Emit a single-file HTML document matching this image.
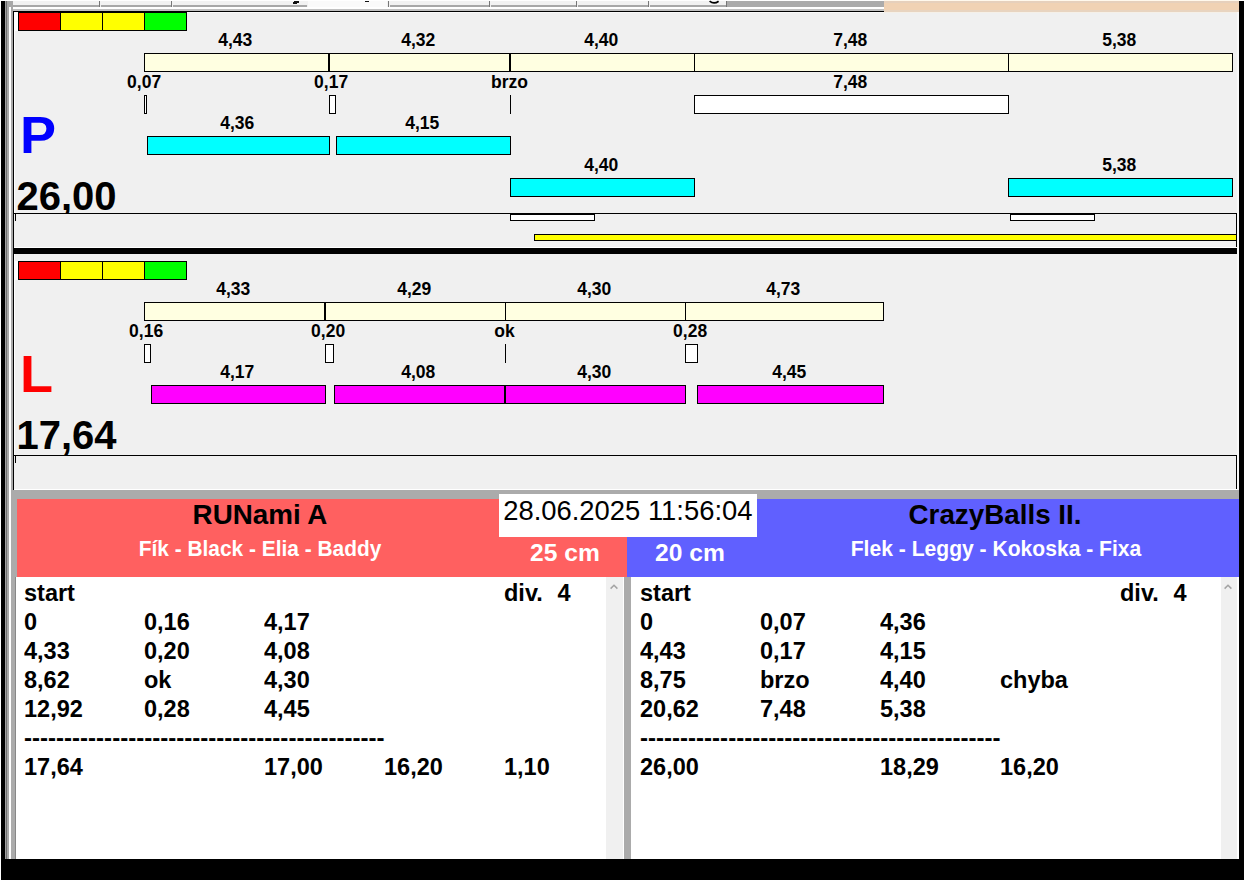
<!DOCTYPE html>
<html><head><meta charset="utf-8"><title>Flyball</title>
<style>
html,body{margin:0;padding:0}
body{width:1244px;height:880px;background:#f0f0f0;position:relative;overflow:hidden;font-family:"Liberation Sans",Arial,sans-serif}
.r{position:absolute;box-sizing:border-box;border:1px solid #000}
.f{position:absolute}
.lb{position:absolute;text-align:center;font-weight:bold;white-space:nowrap}
.lt{position:absolute;white-space:pre;transform-origin:0 50%}
.b{font-weight:bold}
</style></head><body>
<div class="f" style="left:0px;top:0px;width:1px;height:880px;background:#fff"></div>
<div class="f" style="left:1px;top:1px;width:4px;height:879px;background:#000"></div>
<div class="f" style="left:5px;top:0px;width:1px;height:880px;background:#a0a0a0"></div>
<div class="f" style="left:6px;top:0px;width:1px;height:880px;background:#707070"></div>
<div class="f" style="left:7px;top:0px;width:2px;height:880px;background:#a8a8a8"></div>
<div class="f" style="left:9px;top:7px;width:2px;height:873px;background:#fff"></div>
<div class="f" style="left:9px;top:0px;width:2px;height:7px;background:#a8a8a8"></div>
<div class="f" style="left:11px;top:0px;width:2px;height:490px;background:#a8a8a8"></div>
<div class="f" style="left:13px;top:11px;width:1px;height:479px;background:#000"></div>
<div class="f" style="left:14px;top:12px;width:1px;height:478px;background:#fff"></div>
<div class="f" style="left:13px;top:0px;width:714px;height:5px;background:#f2f2f2"></div>
<div class="f" style="left:13px;top:5px;width:86px;height:2px;background:#a8a8a8"></div>
<div class="f" style="left:101px;top:5px;width:70px;height:2px;background:#a8a8a8"></div>
<div class="f" style="left:173px;top:5px;width:134px;height:2px;background:#a8a8a8"></div>
<div class="f" style="left:390px;top:5px;width:99px;height:2px;background:#a8a8a8"></div>
<div class="f" style="left:491px;top:5px;width:85px;height:2px;background:#a8a8a8"></div>
<div class="f" style="left:578px;top:5px;width:70px;height:2px;background:#a8a8a8"></div>
<div class="f" style="left:650px;top:5px;width:76px;height:2px;background:#a8a8a8"></div>
<div class="f" style="left:308px;top:1px;width:79px;height:6px;background:#fafafa"></div>
<div class="f" style="left:13px;top:7px;width:871px;height:2px;background:#fff"></div>
<div class="f" style="left:13px;top:9px;width:871px;height:2px;background:#c0c0c0"></div>
<div class="f" style="left:727px;top:0px;width:157px;height:7px;background:#ababab"></div>
<div class="f" style="left:884px;top:0px;width:355px;height:1px;background:#fff8ec"></div>
<div class="f" style="left:884px;top:1px;width:355px;height:11px;background:#f0d2b4"></div>
<div class="f" style="left:884px;top:1px;width:355px;height:2px;background:#e6d0bc"></div>
<div class="f" style="left:884px;top:10px;width:355px;height:2px;background:#e8d4c0"></div>
<div class="f" style="left:884px;top:12px;width:355px;height:1px;background:#f5f0e8"></div>
<div class="f" style="left:13px;top:11px;width:871px;height:1px;background:#000"></div>
<div class="f" style="left:14px;top:12px;width:870px;height:1px;background:#fafafa"></div>
<div class="f" style="left:0px;top:0px;width:1244px;height:1px;background:#fff"></div>
<div class="f" style="left:884px;top:0px;width:355px;height:1px;background:#fff8ec"></div>
<div class="f" style="left:99px;top:1px;width:1px;height:6px;background:#777"></div>
<div class="f" style="left:171px;top:1px;width:1px;height:6px;background:#777"></div>
<div class="f" style="left:388px;top:1px;width:1px;height:6px;background:#777"></div>
<div class="f" style="left:489px;top:1px;width:1px;height:6px;background:#777"></div>
<div class="f" style="left:576px;top:1px;width:1px;height:6px;background:#777"></div>
<div class="f" style="left:648px;top:1px;width:1px;height:6px;background:#777"></div>
<div class="f" style="left:726px;top:1px;width:1px;height:6px;background:#777"></div>
<div class="f" style="left:294px;top:1px;width:5px;height:2px;background:#111"></div>
<div class="f" style="left:293px;top:2px;width:4px;height:2px;background:#111"></div>
<div class="f" style="left:365px;top:1px;width:4px;height:1px;background:#111"></div>
<svg class="f" style="left:708px;top:0px" width="12" height="5" viewBox="0 0 12 5"><path d="M1.6 1.2 Q6 4.6 10.6 1.2" fill="none" stroke="#000" stroke-width="1.7"/></svg>
<div class="f" style="left:1239px;top:1px;width:5px;height:879px;background:#000"></div>
<div class="f" style="left:1237px;top:12px;width:2px;height:487px;background:#f8f8f8"></div>
<div class="f" style="left:13px;top:248px;width:1224px;height:6px;background:#000"></div>
<div class="f" style="left:11px;top:490px;width:1228px;height:9px;background:#ababab"></div>
<div class="f" style="left:11px;top:499px;width:6px;height:360px;background:#ababab"></div>
<div class="f" style="left:17px;top:499px;width:610px;height:78px;background:#ff6060"></div>
<div class="f" style="left:627px;top:499px;width:612px;height:78px;background:#6060ff"></div>
<div class="f" style="left:16px;top:577px;width:590px;height:282px;background:#fff"></div>
<div class="f" style="left:606px;top:577px;width:17px;height:282px;background:#f0f0f0"></div>
<div class="f" style="left:623px;top:577px;width:1px;height:282px;background:#fff"></div>
<div class="f" style="left:624px;top:577px;width:7px;height:282px;background:#ababab"></div>
<div class="f" style="left:631px;top:577px;width:590px;height:282px;background:#fff"></div>
<div class="f" style="left:1221px;top:577px;width:16px;height:282px;background:#f0f0f0"></div>
<div class="f" style="left:1237px;top:577px;width:2px;height:282px;background:#fff"></div>
<div class="f" style="left:15px;top:577px;width:1px;height:282px;background:#888"></div>
<div class="f" style="left:1px;top:859px;width:1243px;height:21px;background:#000"></div>
<div class="f" style="left:15px;top:12px;width:3px;height:19px;background:#fff"></div>
<div class="r" style="left:18px;top:12px;width:43px;height:19px;background:#ff0000"></div>
<div class="r" style="left:60px;top:12px;width:43px;height:19px;background:#ffff00"></div>
<div class="r" style="left:102px;top:12px;width:43px;height:19px;background:#ffff00"></div>
<div class="r" style="left:144px;top:12px;width:43px;height:19px;background:#00ff00"></div>
<div class="r" style="left:144px;top:53px;width:185px;height:19px;background:#ffffe1"></div>
<div class="lb" style="left:35.30px;top:31.79px;width:400px;font-size:17.5px;line-height:17.5px;color:#000">4,43</div>
<div class="r" style="left:329px;top:53px;width:181px;height:19px;background:#ffffe1"></div>
<div class="lb" style="left:218.30px;top:31.79px;width:400px;font-size:17.5px;line-height:17.5px;color:#000">4,32</div>
<div class="r" style="left:510px;top:53px;width:185px;height:19px;background:#ffffe1"></div>
<div class="lb" style="left:401.30px;top:31.79px;width:400px;font-size:17.5px;line-height:17.5px;color:#000">4,40</div>
<div class="r" style="left:694px;top:53px;width:315px;height:19px;background:#ffffe1"></div>
<div class="lb" style="left:650.30px;top:31.79px;width:400px;font-size:17.5px;line-height:17.5px;color:#000">7,48</div>
<div class="r" style="left:1008px;top:53px;width:225px;height:19px;background:#ffffe1"></div>
<div class="lb" style="left:919.30px;top:31.79px;width:400px;font-size:17.5px;line-height:17.5px;color:#000">5,38</div>
<div class="r" style="left:144px;top:95px;width:3px;height:19px;background:#fff"></div>
<div class="lb" style="left:-55.90px;top:73.59px;width:400px;font-size:17.5px;line-height:17.5px;color:#000">0,07</div>
<div class="r" style="left:329px;top:95px;width:7px;height:19px;background:#fff"></div>
<div class="lb" style="left:131.10px;top:73.59px;width:400px;font-size:17.5px;line-height:17.5px;color:#000">0,17</div>
<div class="f" style="left:510px;top:95px;width:1px;height:19px;background:#000"></div>
<div class="lb" style="left:309.50px;top:73.59px;width:400px;font-size:17.5px;line-height:17.5px;color:#000">brzo</div>
<div class="r" style="left:694px;top:95px;width:315px;height:19px;background:#fff"></div>
<div class="lb" style="left:650.30px;top:73.59px;width:400px;font-size:17.5px;line-height:17.5px;color:#000">7,48</div>
<div class="r" style="left:147px;top:136px;width:183px;height:19px;background:#00ffff"></div>
<div class="lb" style="left:37.30px;top:114.79px;width:400px;font-size:17.5px;line-height:17.5px;color:#000">4,36</div>
<div class="r" style="left:336px;top:136px;width:175px;height:19px;background:#00ffff"></div>
<div class="lb" style="left:222.30px;top:114.79px;width:400px;font-size:17.5px;line-height:17.5px;color:#000">4,15</div>
<div class="r" style="left:510px;top:178px;width:185px;height:19px;background:#00ffff"></div>
<div class="lb" style="left:401.30px;top:156.79px;width:400px;font-size:17.5px;line-height:17.5px;color:#000">4,40</div>
<div class="r" style="left:1008px;top:178px;width:225px;height:19px;background:#00ffff"></div>
<div class="lb" style="left:919.30px;top:156.79px;width:400px;font-size:17.5px;line-height:17.5px;color:#000">5,38</div>
<div class="lt b" style="left:19.80px;top:108.58px;font-size:52px;line-height:52px;color:#0000ff;transform:scaleX(1.04)">P</div>
<div class="lt b" style="left:16.50px;top:176.44px;font-size:40px;line-height:40px;color:#000">26,00</div>
<div class="r" style="left:13px;top:213px;width:1224px;height:34px;background:#f0f0f0"></div>
<div class="f" style="left:14px;top:246px;width:1222px;height:1px;background:#f0f0f0"></div>
<div class="f" style="left:14px;top:247px;width:1223px;height:1px;background:#fff"></div>
<div class="f" style="left:15px;top:213px;width:1px;height:8px;background:#000"></div>
<div class="r" style="left:510px;top:213px;width:85px;height:8px;background:#fff"></div>
<div class="f" style="left:510px;top:214px;width:85px;height:1px;background:#000"></div>
<div class="r" style="left:1010px;top:213px;width:85px;height:8px;background:#fff"></div>
<div class="f" style="left:1010px;top:214px;width:85px;height:1px;background:#000"></div>
<div class="r" style="left:534px;top:234px;width:703px;height:7px;background:#ffff00"></div>
<div class="f" style="left:13px;top:248px;width:1224px;height:6px;background:#000"></div>
<div class="f" style="left:15px;top:261px;width:3px;height:19px;background:#fff"></div>
<div class="r" style="left:18px;top:261px;width:43px;height:19px;background:#ff0000"></div>
<div class="r" style="left:60px;top:261px;width:43px;height:19px;background:#ffff00"></div>
<div class="r" style="left:102px;top:261px;width:43px;height:19px;background:#ffff00"></div>
<div class="r" style="left:144px;top:261px;width:43px;height:19px;background:#00ff00"></div>
<div class="r" style="left:144px;top:302px;width:181px;height:19px;background:#ffffe1"></div>
<div class="lb" style="left:33.30px;top:280.79px;width:400px;font-size:17.5px;line-height:17.5px;color:#000">4,33</div>
<div class="r" style="left:325px;top:302px;width:181px;height:19px;background:#ffffe1"></div>
<div class="lb" style="left:214.30px;top:280.79px;width:400px;font-size:17.5px;line-height:17.5px;color:#000">4,29</div>
<div class="r" style="left:505px;top:302px;width:181px;height:19px;background:#ffffe1"></div>
<div class="lb" style="left:394.30px;top:280.79px;width:400px;font-size:17.5px;line-height:17.5px;color:#000">4,30</div>
<div class="r" style="left:685px;top:302px;width:199px;height:19px;background:#ffffe1"></div>
<div class="lb" style="left:583.30px;top:280.79px;width:400px;font-size:17.5px;line-height:17.5px;color:#000">4,73</div>
<div class="r" style="left:144px;top:344px;width:7px;height:19px;background:#fff"></div>
<div class="lb" style="left:-53.90px;top:322.59px;width:400px;font-size:17.5px;line-height:17.5px;color:#000">0,16</div>
<div class="r" style="left:325px;top:344px;width:9px;height:19px;background:#fff"></div>
<div class="lb" style="left:128.10px;top:322.59px;width:400px;font-size:17.5px;line-height:17.5px;color:#000">0,20</div>
<div class="f" style="left:505px;top:344px;width:1px;height:19px;background:#000"></div>
<div class="lb" style="left:304.50px;top:322.59px;width:400px;font-size:17.5px;line-height:17.5px;color:#000">ok</div>
<div class="r" style="left:685px;top:344px;width:13px;height:19px;background:#fff"></div>
<div class="lb" style="left:490.10px;top:322.59px;width:400px;font-size:17.5px;line-height:17.5px;color:#000">0,28</div>
<div class="r" style="left:151px;top:385px;width:175px;height:19px;background:#ff00ff"></div>
<div class="lb" style="left:37.30px;top:363.79px;width:400px;font-size:17.5px;line-height:17.5px;color:#000">4,17</div>
<div class="r" style="left:334px;top:385px;width:171px;height:19px;background:#ff00ff"></div>
<div class="lb" style="left:218.30px;top:363.79px;width:400px;font-size:17.5px;line-height:17.5px;color:#000">4,08</div>
<div class="r" style="left:505px;top:385px;width:181px;height:19px;background:#ff00ff"></div>
<div class="lb" style="left:394.30px;top:363.79px;width:400px;font-size:17.5px;line-height:17.5px;color:#000">4,30</div>
<div class="r" style="left:697px;top:385px;width:187px;height:19px;background:#ff00ff"></div>
<div class="lb" style="left:589.30px;top:363.79px;width:400px;font-size:17.5px;line-height:17.5px;color:#000">4,45</div>
<div class="lt b" style="left:19.80px;top:347.58px;font-size:52px;line-height:52px;color:#ff0000;transform:scaleX(1.04)">L</div>
<div class="lt b" style="left:16.50px;top:414.54px;font-size:40px;line-height:40px;color:#000">17,64</div>
<div class="r" style="left:13px;top:455px;width:1224px;height:34px;background:#f0f0f0"></div>
<div class="f" style="left:14px;top:488px;width:1222px;height:1px;background:#f0f0f0"></div>
<div class="f" style="left:14px;top:489px;width:1223px;height:1px;background:#fff"></div>
<div class="f" style="left:15px;top:455px;width:1px;height:8px;background:#000"></div>
<div class="f" style="left:11px;top:490px;width:1228px;height:9px;background:#ababab"></div>
<div class="lb" style="left:60.00px;top:500.47px;width:400px;font-size:28.5px;line-height:28.5px;color:#000;transform:scaleX(0.975)">RUNami A</div>
<div class="lb" style="left:59.60px;top:538.97px;width:400px;font-size:21.3px;line-height:21.3px;color:#fff;transform:scaleX(0.981)">Fík - Black - Elia - Baddy</div>
<div class="lb" style="left:794.60px;top:500.17px;width:400px;font-size:28.5px;line-height:28.5px;color:#000;transform:scaleX(0.975)">CrazyBalls II.</div>
<div class="lb" style="left:796.00px;top:538.97px;width:400px;font-size:21.3px;line-height:21.3px;color:#fff;transform:scaleX(0.99)">Flek - Leggy - Kokoska - Fixa</div>
<div class="lt b" style="left:530.00px;top:540.88px;font-size:24px;line-height:24px;color:#fff;transform:scaleX(1.025)">25 cm</div>
<div class="lt b" style="left:655.00px;top:540.88px;font-size:24px;line-height:24px;color:#fff;transform:scaleX(1.025)">20 cm</div>
<div class="f" style="left:499px;top:494px;width:258px;height:43px;background:#fff"></div>
<div class="lt" style="left:503.20px;top:497.01px;font-size:27.4px;line-height:27.4px;color:#000">28.06.2025 11:56:04</div>
<svg class="f" style="left:608px;top:582px" width="12" height="9" viewBox="0 0 12 9"><path d="M2.6 6.6 L6 3.2 L9.4 6.6" fill="none" stroke="#a4a4a4" stroke-width="1.5"/></svg>
<svg class="f" style="left:1222px;top:582px" width="12" height="9" viewBox="0 0 12 9"><path d="M2.6 6.6 L6 3.2 L9.4 6.6" fill="none" stroke="#a4a4a4" stroke-width="1.5"/></svg>
<div class="lt b" style="left:23.50px;top:582.43px;font-size:23px;line-height:23px;color:#000;transform:scaleX(1.022)">start</div>
<div class="lt b" style="left:503.50px;top:582.43px;font-size:23px;line-height:23px;color:#000;transform:scaleX(1.022)">div.<span style="letter-spacing:0.8px">&nbsp;&nbsp;</span>4</div>
<div class="lt b" style="left:23.50px;top:611.43px;font-size:23px;line-height:23px;color:#000;transform:scaleX(1.022)">0</div>
<div class="lt b" style="left:143.50px;top:611.43px;font-size:23px;line-height:23px;color:#000;transform:scaleX(1.022)">0,16</div>
<div class="lt b" style="left:263.50px;top:611.43px;font-size:23px;line-height:23px;color:#000;transform:scaleX(1.022)">4,17</div>
<div class="lt b" style="left:23.50px;top:640.43px;font-size:23px;line-height:23px;color:#000;transform:scaleX(1.022)">4,33</div>
<div class="lt b" style="left:143.50px;top:640.43px;font-size:23px;line-height:23px;color:#000;transform:scaleX(1.022)">0,20</div>
<div class="lt b" style="left:263.50px;top:640.43px;font-size:23px;line-height:23px;color:#000;transform:scaleX(1.022)">4,08</div>
<div class="lt b" style="left:23.50px;top:669.43px;font-size:23px;line-height:23px;color:#000;transform:scaleX(1.022)">8,62</div>
<div class="lt b" style="left:143.50px;top:669.43px;font-size:23px;line-height:23px;color:#000;transform:scaleX(1.022)">ok</div>
<div class="lt b" style="left:263.50px;top:669.43px;font-size:23px;line-height:23px;color:#000;transform:scaleX(1.022)">4,30</div>
<div class="lt b" style="left:23.50px;top:698.43px;font-size:23px;line-height:23px;color:#000;transform:scaleX(1.022)">12,92</div>
<div class="lt b" style="left:143.50px;top:698.43px;font-size:23px;line-height:23px;color:#000;transform:scaleX(1.022)">0,28</div>
<div class="lt b" style="left:263.50px;top:698.43px;font-size:23px;line-height:23px;color:#000;transform:scaleX(1.022)">4,45</div>
<div class="lt b" style="left:23.50px;top:727.43px;font-size:23px;line-height:23px;color:#000;transform:scaleX(1.046)">---------------------------------------------</div>
<div class="lt b" style="left:23.50px;top:756.43px;font-size:23px;line-height:23px;color:#000;transform:scaleX(1.022)">17,64</div>
<div class="lt b" style="left:263.50px;top:756.43px;font-size:23px;line-height:23px;color:#000;transform:scaleX(1.022)">17,00</div>
<div class="lt b" style="left:383.50px;top:756.43px;font-size:23px;line-height:23px;color:#000;transform:scaleX(1.022)">16,20</div>
<div class="lt b" style="left:503.50px;top:756.43px;font-size:23px;line-height:23px;color:#000;transform:scaleX(1.022)">1,10</div>
<div class="lt b" style="left:639.50px;top:582.43px;font-size:23px;line-height:23px;color:#000;transform:scaleX(1.022)">start</div>
<div class="lt b" style="left:1119.50px;top:582.43px;font-size:23px;line-height:23px;color:#000;transform:scaleX(1.022)">div.<span style="letter-spacing:0.8px">&nbsp;&nbsp;</span>4</div>
<div class="lt b" style="left:639.50px;top:611.43px;font-size:23px;line-height:23px;color:#000;transform:scaleX(1.022)">0</div>
<div class="lt b" style="left:759.50px;top:611.43px;font-size:23px;line-height:23px;color:#000;transform:scaleX(1.022)">0,07</div>
<div class="lt b" style="left:879.50px;top:611.43px;font-size:23px;line-height:23px;color:#000;transform:scaleX(1.022)">4,36</div>
<div class="lt b" style="left:639.50px;top:640.43px;font-size:23px;line-height:23px;color:#000;transform:scaleX(1.022)">4,43</div>
<div class="lt b" style="left:759.50px;top:640.43px;font-size:23px;line-height:23px;color:#000;transform:scaleX(1.022)">0,17</div>
<div class="lt b" style="left:879.50px;top:640.43px;font-size:23px;line-height:23px;color:#000;transform:scaleX(1.022)">4,15</div>
<div class="lt b" style="left:639.50px;top:669.43px;font-size:23px;line-height:23px;color:#000;transform:scaleX(1.022)">8,75</div>
<div class="lt b" style="left:759.50px;top:669.43px;font-size:23px;line-height:23px;color:#000;transform:scaleX(1.022)">brzo</div>
<div class="lt b" style="left:879.50px;top:669.43px;font-size:23px;line-height:23px;color:#000;transform:scaleX(1.022)">4,40</div>
<div class="lt b" style="left:999.50px;top:669.43px;font-size:23px;line-height:23px;color:#000;transform:scaleX(1.022)">chyba</div>
<div class="lt b" style="left:639.50px;top:698.43px;font-size:23px;line-height:23px;color:#000;transform:scaleX(1.022)">20,62</div>
<div class="lt b" style="left:759.50px;top:698.43px;font-size:23px;line-height:23px;color:#000;transform:scaleX(1.022)">7,48</div>
<div class="lt b" style="left:879.50px;top:698.43px;font-size:23px;line-height:23px;color:#000;transform:scaleX(1.022)">5,38</div>
<div class="lt b" style="left:639.50px;top:727.43px;font-size:23px;line-height:23px;color:#000;transform:scaleX(1.046)">---------------------------------------------</div>
<div class="lt b" style="left:639.50px;top:756.43px;font-size:23px;line-height:23px;color:#000;transform:scaleX(1.022)">26,00</div>
<div class="lt b" style="left:879.50px;top:756.43px;font-size:23px;line-height:23px;color:#000;transform:scaleX(1.022)">18,29</div>
<div class="lt b" style="left:999.50px;top:756.43px;font-size:23px;line-height:23px;color:#000;transform:scaleX(1.022)">16,20</div>
</body></html>
